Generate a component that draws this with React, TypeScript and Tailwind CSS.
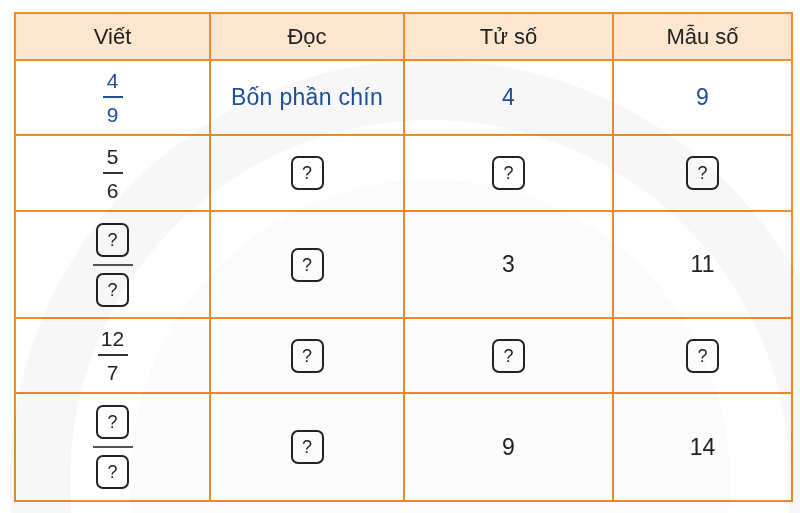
import React from "react";

const font = { fontFamily: '"Liberation Sans", Arial, sans-serif' };

function QBox() {
  return (
    <div className="w-[33px] h-[34px] border-2 border-[#222] rounded-[7px] flex items-center justify-center text-[18px] text-[#222] leading-none">
      ?
    </div>
  );
}

function Frac({ n, d, blue }: { n: string; d: string; blue?: boolean }) {
  const c = blue ? "text-[#1d4f9c]" : "text-[#222]";
  const line = blue ? "bg-[#1d4f9c]" : "bg-[#333]";
  return (
    <div className={`flex flex-col items-center ${c} text-[21px] leading-none`}>
      <span className="pb-[5px]">{n}</span>
      <div className={`h-[2px] ${n.length > 1 ? "w-[30px]" : "w-[20px]"} ${line}`} />
      <span className="pt-[6px]">{d}</span>
    </div>
  );
}

function BoxFrac() {
  return (
    <div className="flex flex-col items-center">
      <QBox />
      <div className="h-[2px] w-[40px] bg-[#555] my-[7px]" />
      <QBox />
    </div>
  );
}

function Cell({ children, head }: { children?: React.ReactNode; head?: boolean }) {
  return (
    <div
      className={`flex items-center justify-center text-[#222] ${
        head ? "bg-[#fde6cf] text-[22px]" : "bg-white text-[23px]"
      }`}
    >
      {children}
    </div>
  );
}

export default function App() {
  return (
    <div className="relative w-[800px] h-[513px] bg-white overflow-hidden" style={font}>
      <div className="pl-[14px] pt-[12px]">
        <div className="grid grid-cols-[193px_192px_207px_177px] grid-rows-[45px_73px_74px_105px_73px_106px] gap-[2px] p-[2px] bg-[#ef8b2c] w-[779px]">
          <Cell head>Viết</Cell>
          <Cell head>Đọc</Cell>
          <Cell head>Tử số</Cell>
          <Cell head>Mẫu số</Cell>

          <Cell>
            <Frac n="4" d="9" blue />
          </Cell>
          <Cell>
            <span className="text-[#1d4f9c] tracking-[0.3px]">Bốn phần chín</span>
          </Cell>
          <Cell>
            <span className="text-[#1d4f9c]">4</span>
          </Cell>
          <Cell>
            <span className="text-[#1d4f9c]">9</span>
          </Cell>

          <Cell>
            <Frac n="5" d="6" />
          </Cell>
          <Cell>
            <QBox />
          </Cell>
          <Cell>
            <QBox />
          </Cell>
          <Cell>
            <QBox />
          </Cell>

          <Cell>
            <BoxFrac />
          </Cell>
          <Cell>
            <QBox />
          </Cell>
          <Cell>3</Cell>
          <Cell>11</Cell>

          <Cell>
            <Frac n="12" d="7" />
          </Cell>
          <Cell>
            <QBox />
          </Cell>
          <Cell>
            <QBox />
          </Cell>
          <Cell>
            <QBox />
          </Cell>

          <Cell>
            <BoxFrac />
          </Cell>
          <Cell>
            <QBox />
          </Cell>
          <Cell>9</Cell>
          <Cell>14</Cell>
        </div>
      </div>
      <svg
        className="absolute inset-0 pointer-events-none mix-blend-multiply"
        width="800"
        height="513"
        viewBox="0 0 800 513"
      >
        <circle cx="430" cy="480" r="390" fill="none" stroke="#f7f7f7" strokeWidth="60" />
        <circle cx="430" cy="480" r="300" fill="#fbfbfb" />
      </svg>
    </div>
  );
}
